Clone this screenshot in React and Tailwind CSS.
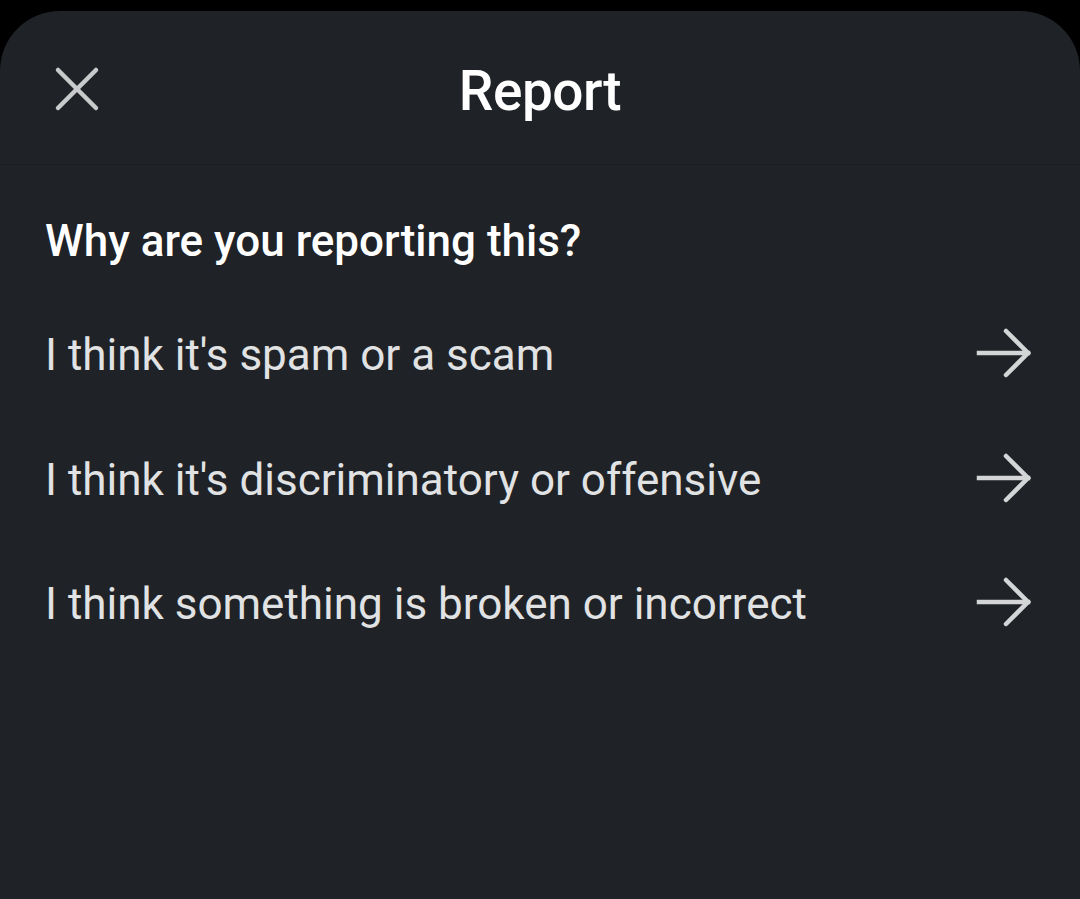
import React from 'react'

const reasons = [
  "I think it's spam or a scam",
  "I think it's discriminatory or offensive",
  'I think something is broken or incorrect',
]

function Arrow() {
  return (
    <svg width="56" height="52" viewBox="0 0 56 52" fill="none" stroke="#d4d5d6" strokeWidth="4.5" strokeLinecap="square" className="-mt-[4px]">
      <path d="M3 26 H52" />
      <path d="M30 4 L52 26 L30 48" strokeLinecap="round" strokeLinejoin="miter" />
    </svg>
  )
}

export default function App() {
  return (
    <div className="w-[1080px] h-[899px] bg-black pt-[11px] overflow-hidden" style={{ fontFamily: 'Roboto, "Noto Sans", sans-serif' }}>
      <div className="h-full bg-[#1f2226] rounded-t-[60px] flex flex-col">
        {/* header */}
        <div className="relative h-[154px] flex items-center justify-center border-b border-[#1b1e21]">
          <button className="absolute left-[50px] top-[51px] w-[54px] h-[54px] flex items-center justify-center">
            <svg width="48" height="48" viewBox="0 0 48 48" fill="none" stroke="#c9cacb" strokeWidth="4.5" strokeLinecap="round">
              <path d="M5 5 L43 43" />
              <path d="M43 5 L5 43" />
            </svg>
          </button>
          <h1 className="text-[55px] font-medium text-white tracking-[-0.5px] leading-none mt-[7px]">Report</h1>
        </div>
        {/* reasons */}
        <div className="px-[45px] pt-[54px]">
          <h2 className="text-[44px] font-medium text-white leading-none">Why are you reporting this?</h2>
          <div className="flex flex-col mt-[30px]">
            {reasons.map((r) => (
              <div key={r} className="h-[124.5px] flex items-center justify-between pr-[3px]">
                <span className="text-[44px] text-[#e1e2e3] leading-none">{r}</span>
                <Arrow />
              </div>
            ))}
          </div>
        </div>
      </div>
    </div>
  )
}
